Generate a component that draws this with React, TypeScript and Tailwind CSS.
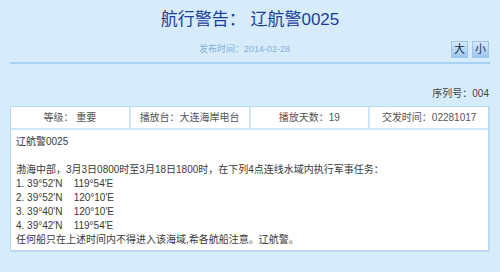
const coords = [
  ["1. 39°52'N", "119°54'E"],
  ["2. 39°52'N", "120°10'E"],
  ["3. 39°40'N", "120°10'E"],
  ["4. 39°42'N", "119°54'E"],
];

const cells = ["等级： 重要", "播放台：大连海岸电台", "播放天数：19", "交发时间：02281017"];

export default function App() {
  return (
    <div
      className="w-[500px] h-[272px] bg-[#d6ecfa] overflow-hidden"
      style={{ fontFamily: '"Liberation Sans", "Noto Sans CJK SC", sans-serif' }}
    >
      {/* Title */}
      <h1 className="pt-[8px] h-[32px] text-center text-[17px] leading-[24px] text-[#1c3e9a]">
        航行警告： 辽航警0025
      </h1>

      {/* Date + font size buttons */}
      <div className="mt-[9px] h-[17px] grid grid-cols-[1fr_auto_1fr] items-center pr-[11px]">
        <div />
        <p className="text-[9px] leading-[17px] text-[#8aacd6]">发布时间：2014-02-28</p>
        <div className="flex justify-end gap-[4px]">
          <button className="w-[17px] h-[17px] flex items-center justify-center border border-[#9fc5eb] bg-gradient-to-b from-[#d6e9fb] to-[#9fc6ee] text-[11px] leading-none text-[#1b2f55]">
            大
          </button>
          <button className="w-[17px] h-[17px] flex items-center justify-center border border-[#9fc5eb] bg-gradient-to-b from-[#d6e9fb] to-[#9fc6ee] text-[11px] leading-none text-[#1b2f55]">
            小
          </button>
        </div>
      </div>

      <div className="mt-[4px] mx-[10px] h-[2px] bg-[#a9d1f2]" />

      {/* Serial number */}
      <p className="mt-[23px] pr-[11px] text-right text-[10px] leading-[14px] text-[#444]">序列号：004</p>

      {/* Info table */}
      <div className="mt-[5px] ml-[10px] w-[480px] border-l border-t border-r-2 border-b-2 border-[#bcdaf3] bg-white">
        <div className="grid grid-cols-4 gap-[2px] bg-[#d0e6f7] border-b-2 border-[#d0e6f7]">
          {cells.map((c) => (
            <div key={c} className="h-[21px] bg-white flex items-center justify-center text-[10px] text-[#555]">
              {c}
            </div>
          ))}
        </div>
        <div className="px-[5px] pt-[5px] pb-[3px] text-[10px] leading-[14px] text-[#3a3a3a]">
          <p>辽航警0025</p>
          <p>&nbsp;</p>
          <p>渤海中部，3月3日0800时至3月18日1800时，在下列4点连线水域内执行军事任务：</p>
          {coords.map(([a, b]) => (
            <p key={a}>
              {a}
              {"\u00a0\u00a0\u00a0\u00a0"}
              {b}
            </p>
          ))}
          <p>任何船只在上述时间内不得进入该海域,希各航船注意。辽航警。</p>
        </div>
      </div>
    </div>
  );
}
